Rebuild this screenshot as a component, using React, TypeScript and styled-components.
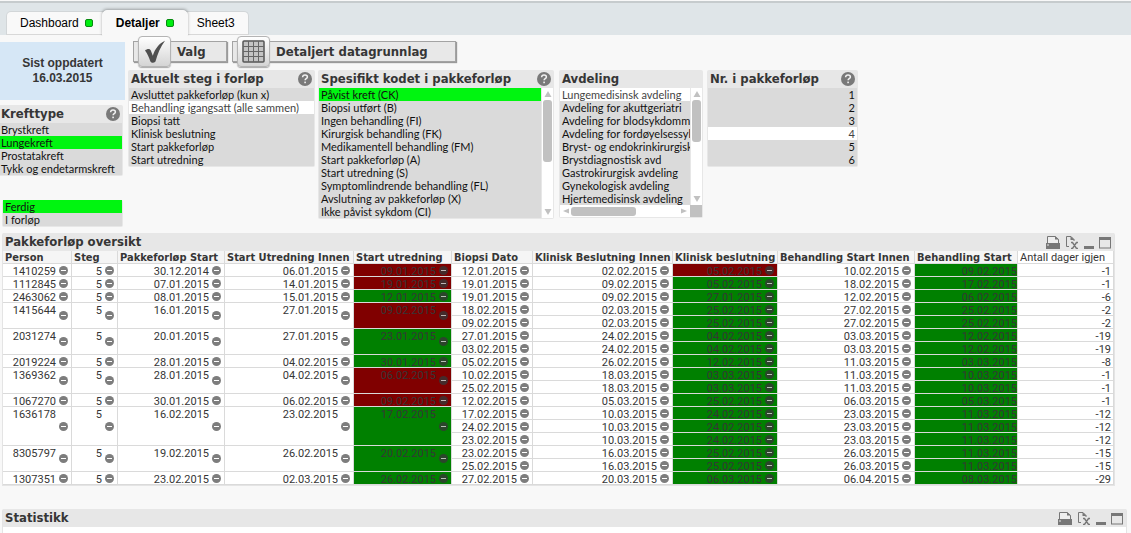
import React from "react";
import styled, { createGlobalStyle, css } from "styled-components";

const UI_FONT = `Roboto, "DejaVu Sans Condensed", sans-serif`;
const LIST_FONT = `Lato, Roboto, sans-serif`;
const TITLE_FONT = `"DejaVu Sans Condensed", "DejaVu Sans", sans-serif`;
const TAB_FONT = `"Liberation Sans", Arial, sans-serif`;

const GlobalStyle = createGlobalStyle`
  *, *::before, *::after { box-sizing: border-box; }
  body { margin: 0; background: #f8f8f8; }
  button { font: inherit; color: inherit; margin: 0; padding: 0; border: 0; background: none; text-align: inherit; cursor: pointer; }
  ul { list-style: none; margin: 0; padding: 0; }
  h2 { margin: 0; font-weight: bold; }
`;

const Page = styled.div`
  display: flex;
  flex-direction: column;
  min-height: 100vh;
  font: 11px/13px ${UI_FONT};
  color: #363636;
`;

/* ---------- sheet tabs ---------- */

const TabBar = styled.nav`
  display: flex;
  align-items: flex-end;
  height: 36px;
  padding-left: 6px;
  background: #dfe5e8;
  border-top: 1px solid #f8f8f8;
  box-shadow: inset 0 2px 0 #c6cbcd, inset 0 -1px 0 #f8f8f8;
`;

const Tab = styled.button<{ $active?: boolean }>`
  display: flex;
  align-items: center;
  gap: 6px;
  height: 24px;
  margin-bottom: 1px;
  padding: 0 13px;
  border: 1px solid #d2d6d8;
  border-bottom-color: #d8d8d8;
  border-radius: 5px 5px 0 0;
  background: #f9f9f9;
  font: 12px/14px ${TAB_FONT};
  color: #000;
  ${(p) =>
    p.$active &&
    css`
      position: relative;
      z-index: 1;
      height: 26px;
      margin: 0 -5px;
      border-color: #f8f8f8;
      background: #f8f8f8;
      font-weight: bold;
      box-shadow: 0 -1px 3px rgba(0, 0, 0, 0.3);
      clip-path: inset(-4px -4px 0 -4px);
    `}
`;

const Flag = styled.span`
  width: 8px;
  height: 8px;
  border: 1px solid #0a8a12;
  border-radius: 2px;
  background: #00ee10;
`;

/* ---------- filter area ---------- */

const Filters = styled.section`
  display: flex;
  align-items: flex-start;
  gap: 3px;
`;

const SideColumn = styled.div`
  display: flex;
  flex-direction: column;
  flex: none;
  width: 125px;
  padding-top: 6px;
`;

const Updated = styled.div`
  height: 58px;
  margin-bottom: 5px;
  padding: 14px 0;
  background: #d6e7f6;
  font: bold 12px/15px ${TAB_FONT};
  text-align: center;
`;

const MainColumn = styled.div`
  flex: 1;
  min-width: 0;
`;

const ActionRow = styled.div`
  display: flex;
  align-items: center;
  gap: 5px;
  height: 31px;
  margin-bottom: 3px;
  padding-left: 5px;
`;

const ActionButton = styled.button<{ $width: number }>`
  display: flex;
  align-items: center;
  gap: 6px;
  width: ${(p) => p.$width}px;
  height: 21px;
  padding-left: 4px;
  border: 1px solid #a3a3a3;
  box-shadow: 1px 1px 1px #9a9a9a;
  background: #e8e8e8;
  font: bold 13px/18px ${TITLE_FONT};
  white-space: nowrap;
`;

const ActionTile = styled.span`
  display: flex;
  align-items: center;
  justify-content: center;
  flex: none;
  width: 33px;
  height: 31px;
  margin: -5px 0;
  border: 1px solid #b4b4b4;
  border-radius: 4px;
  box-shadow: 0 1px 1px #aaa;
  background: linear-gradient(#fff, #d4d4d4);
`;

const PanelRow = styled.div`
  display: flex;
  align-items: flex-start;
  gap: 4px;
`;

const ListPanel = styled.section<{ $width: number; $below?: number; $left?: number }>`
  flex: none;
  width: ${(p) => p.$width}px;
  margin-top: ${(p) => p.$below ?? 0}px;
  margin-left: ${(p) => p.$left ?? 0}px;
  padding: 0 1px 1px;
  border-radius: 2px;
  background: #e7e7e7;
`;

const PanelHead = styled.header`
  display: flex;
  align-items: center;
  justify-content: space-between;
  height: 18px;
  padding: 0 2px;
`;

const PanelTitle = styled.h2`
  font: bold 13px/18px ${TITLE_FONT};
  white-space: nowrap;
`;

const IconButton = styled.button`
  display: block;
  flex: none;
  line-height: 0;
`;

const ListBody = styled.div`
  display: flex;
`;

const List = styled.ul`
  flex: 1;
  min-width: 0;
  background: #dadada;
`;

const Item = styled.button<{ $state?: "selected" | "possible"; $right?: boolean }>`
  display: block;
  width: 100%;
  height: 13px;
  padding: 0 2px;
  overflow: hidden;
  font: 11px/14px ${LIST_FONT};
  white-space: nowrap;
  color: #111;
  text-align: ${(p) => (p.$right ? "right" : "left")};
  ${(p) => p.$state === "selected" && "background: #00f510;"}
  ${(p) => p.$state === "possible" && "background: #fff; color: #444;"}
`;

const Scroll = styled.div<{ $across?: boolean }>`
  display: flex;
  flex-direction: ${(p) => (p.$across ? "row" : "column")};
  align-items: center;
  flex: ${(p) => (p.$across ? "1" : "none")};
  ${(p) => (p.$across ? "height: 12px;" : "width: 11px; margin-left: 1px;")}
  padding: ${(p) => (p.$across ? "0 2px" : "2px 0")};
  background: #fff;
`;

const Thumb = styled.span<{ $length: number; $across?: boolean }>`
  width: ${(p) => (p.$across ? p.$length : 9)}px;
  height: ${(p) => (p.$across ? 9 : p.$length)}px;
  margin: ${(p) => (p.$across ? "0 auto 0 1px" : "2px 0 auto")};
  border-radius: 3px;
  background: #c1c1c1;
`;

const ScrollFoot = styled.div`
  display: flex;
`;

const ScrollCorner = styled.span`
  width: 12px;
  height: 12px;
  background: #c1c1c1;
`;

/* ---------- sheet objects ---------- */

const Sheet = styled.section<{ $gap: number; $right: number; $grow?: boolean }>`
  display: flex;
  flex-direction: column;
  flex: ${(p) => (p.$grow ? "1" : "none")};
  margin: ${(p) => p.$gap}px ${(p) => p.$right}px 0 2px;
  border: solid #e4e4e4;
  border-width: ${(p) => (p.$grow ? "0 1px" : "0 1px 1px")};
  border-radius: 2px 2px 0 0;
  background: #fff;
`;

const SheetHead = styled.header`
  display: flex;
  align-items: center;
  justify-content: space-between;
  height: 18px;
  padding: 0 3px 0 2px;
  background: #e7e7e7;
`;

const Tools = styled.div`
  display: flex;
  align-items: center;
  gap: 5px;
`;

const TableScroll = styled.div`
  overflow-x: auto;
`;

const Grid = styled.table`
  width: 100%;
  min-width: 1020px;
  table-layout: fixed;
  border-collapse: separate;
  border-spacing: 0;
`;

const HeadCell = styled.th<{ $plain?: boolean }>`
  padding: 0;
  border: solid #dadada;
  border-width: 0 1px 1px 0;
  background: ${(p) => (p.$plain ? "#fff" : "#f5f5f5")};
  font: bold 11px/14px ${TITLE_FONT};
  ${(p) => p.$plain && `font: 11px/14px ${UI_FONT};`}
  text-align: left;
`;

const HeadLabel = styled.div`
  height: 12px;
  padding-left: 2px;
  white-space: nowrap;
`;

const fills = { red: "#800000", green: "#008000" };
type Fill = keyof typeof fills;

const Cell = styled.td<{ $fill?: Fill }>`
  padding: 0;
  border: solid #dadada;
  border-width: 0 1px 1px 0;
  vertical-align: top;
  background: ${(p) => (p.$fill ? fills[p.$fill] : "#fff")};
`;

const CellLine = styled.div<{ $rows: number; $pad: number }>`
  display: flex;
  justify-content: flex-end;
  gap: 3px;
  height: ${(p) => p.$rows * 13 - 1}px;
  padding-right: ${(p) => p.$pad}px;
  line-height: 15px;
  white-space: nowrap;
`;

const Collapse = styled.button`
  align-self: center;
  flex: none;
  line-height: 0;
`;

/* ---------- icons ---------- */

const HelpIcon = () => (
  <svg width="14" height="14" viewBox="0 0 14 14" aria-hidden="true">
    <circle cx="7" cy="7" r="7" fill="#797979" />
    <path d="M4.6 5.2C4.7 3.7 5.7 3 7 3c1.400 0 2.400.8 2.400 2 0 1.700-2.300 1.700-2.300 3.300" fill="none" stroke="#f2f2f2" strokeWidth="1.500" />
    <rect x="6.300" y="9.600" width="1.600" height="1.600" fill="#f2f2f2" />
  </svg>
);

const CheckIcon = () => (
  <svg width="22" height="24" viewBox="0 0 22 24" aria-hidden="true">
    <path d="M1 10.500C3.500 8.500 6 8.300 7 11l1.800 4.800C11 8.800 15 3.500 21 .8 16.500 7 13.500 14 11.500 21.500c-1.600 1.800-3.900 1.800-5.100 0C5 17.500 3.500 13.500 1 10.500z" fill="#505050" />
  </svg>
);

const GridIcon = () => (
  <svg width="23" height="23" viewBox="0 0 23 23" aria-hidden="true">
    <rect x="1" y="1" width="21" height="21" rx="1" fill="#c4c4c4" stroke="#555" strokeWidth="1.500" />
    <path d="M6.500 1v21M11.500 1v21M16.500 1v21M1 6.500h21M1 11.500h21M1 16.500h21" stroke="#666" fill="none" />
  </svg>
);

const MinusIcon = ({ dim }: { dim?: boolean }) => (
  <svg width="9" height="9" viewBox="0 0 9 9" aria-hidden="true">
    <circle cx="4.500" cy="4.500" r="4.500" fill={dim ? "#363636" : "#7d7d7d"} fillOpacity={dim ? 0.8 : 1} />
    <rect x="2" y="4" width="5" height="1" fill="#fff" fillOpacity={dim ? 0.65 : 1} />
  </svg>
);

const PrintIcon = () => (
  <svg width="14" height="13" viewBox="0 0 14 13" aria-hidden="true">
    <path d="M1.500 7V.5h7.500l3.500 3V7" fill="#eee" stroke="#777" />
    <path d="M9 0v3.500h4z" fill="#777" />
    <path d="M0 7h14v6H0z" fill="#777" />
    <rect x="1" y="8.500" width="2" height="1" fill="#e7e7e7" />
  </svg>
);

const ExportIcon = () => (
  <svg width="14" height="13" viewBox="0 0 14 13" aria-hidden="true">
    <path d="M4 10.500H1.500V.5H6l3 3V5" fill="none" stroke="#777" />
    <path d="M5.500 0v4H9.500z" fill="#777" />
    <path d="M6 6.500h1.500l4 6H13M13 6.500h-1.500l-4 6H6" fill="none" stroke="#777" strokeWidth="1.400" />
  </svg>
);

const MinimizeIcon = () => (
  <svg width="10" height="13" viewBox="0 0 10 13" aria-hidden="true">
    <rect y="10" width="10" height="3" fill="#777" />
  </svg>
);

const MaximizeIcon = () => (
  <svg width="12" height="13" viewBox="0 0 12 13" aria-hidden="true">
    <rect x=".5" y="1.500" width="11" height="10.500" fill="none" stroke="#777" />
    <rect y="1" width="12" height="3" fill="#777" />
  </svg>
);

const arrowPaths = {
  up: "M4 1l3.500 6h-7z",
  down: "M4 7L.5 1h7z",
  left: "M1 4l6-2.500v5z",
  right: "M7 4L1 1.500v5z",
};

const Arrow = ({ to }: { to: keyof typeof arrowPaths }) => (
  <IconButton aria-label={to}>
    <svg width="8" height="8" viewBox="0 0 8 8" aria-hidden="true">
      <path d={arrowPaths[to]} fill="#c1c1c1" />
    </svg>
  </IconButton>
);

/* ---------- list boxes ---------- */

type ListProps = {
  title?: string;
  help?: boolean;
  items: string[];
  selected?: string;
  possible?: string;
  width: number;
  below?: number;
  left?: number;
  right?: boolean;
  thumb?: number;
  acrossThumb?: number;
};

function ListBox({ title, help, items, selected, possible, width, below, left, right, thumb, acrossThumb }: ListProps) {
  return (
    <ListPanel $width={width} $below={below} $left={left}>
      {title && (
        <PanelHead>
          <PanelTitle>{title}</PanelTitle>
          {help && (
            <IconButton aria-label={`Hjelp: ${title}`}>
              <HelpIcon />
            </IconButton>
          )}
        </PanelHead>
      )}
      <ListBody>
        <List>
          {items.map((item) => (
            <li key={item}>
              <Item $right={right} aria-pressed={item === selected} $state={item === selected ? "selected" : item === possible ? "possible" : undefined}>
                {item}
              </Item>
            </li>
          ))}
        </List>
        {thumb && (
          <Scroll>
            <Arrow to="up" />
            <Thumb $length={thumb} />
            <Arrow to="down" />
          </Scroll>
        )}
      </ListBody>
      {acrossThumb && (
        <ScrollFoot>
          <Scroll $across>
            <Arrow to="left" />
            <Thumb $across $length={acrossThumb} />
            <Arrow to="right" />
          </Scroll>
          <ScrollCorner />
        </ScrollFoot>
      )}
    </ListPanel>
  );
}

/* ---------- patient pathway table ---------- */

const columns: [string, number][] = [
  ["Person", 69],
  ["Steg", 46],
  ["Pakkeforløp Start", 107],
  ["Start Utredning Innen", 129],
  ["Start utredning", 98],
  ["Biopsi Dato", 81],
  ["Klinisk Beslutning Innen", 140],
  ["Klinisk beslutning", 105],
  ["Behandling Start Innen", 137],
  ["Behandling Start", 103],
  ["Antall dager igjen", 96],
];

type Detail = [biopsy: string, decideBy: string, decided: string, treatBy: string, treated: string, days: number];
type Person = { lead: [string, string, string, string]; fill: Fill; decidedFill?: Fill; details: Detail[] };

const people: Person[] = [
  { lead: ["1410259", "30.12.2014", "06.01.2015", "09.01.2015"], fill: "red", decidedFill: "red", details: [["12.01.2015", "02.02.2015", "05.02.2015", "10.02.2015", "09.02.2015", -1]] },
  { lead: ["1112845", "07.01.2015", "14.01.2015", "19.01.2015"], fill: "red", details: [["19.01.2015", "09.02.2015", "05.02.2015", "18.02.2015", "17.02.2015", -1]] },
  { lead: ["2463062", "08.01.2015", "15.01.2015", "12.01.2015"], fill: "green", details: [["19.01.2015", "09.02.2015", "27.01.2015", "12.02.2015", "06.02.2015", -6]] },
  {
    lead: ["1415644", "16.01.2015", "27.01.2015", "09.02.2015"],
    fill: "red",
    details: [
      ["18.02.2015", "02.03.2015", "25.02.2015", "27.02.2015", "25.02.2015", -2],
      ["09.02.2015", "02.03.2015", "25.02.2015", "27.02.2015", "25.02.2015", -2],
    ],
  },
  {
    lead: ["2031274", "20.01.2015", "27.01.2015", "23.01.2015"],
    fill: "green",
    details: [
      ["27.01.2015", "24.02.2015", "04.02.2015", "03.03.2015", "12.02.2015", -19],
      ["03.02.2015", "24.02.2015", "04.02.2015", "03.03.2015", "12.02.2015", -19],
    ],
  },
  { lead: ["2019224", "28.01.2015", "04.02.2015", "30.01.2015"], fill: "green", details: [["05.02.2015", "26.02.2015", "12.02.2015", "11.03.2015", "03.03.2015", -8]] },
  {
    lead: ["1369362", "28.01.2015", "04.02.2015", "06.02.2015"],
    fill: "red",
    details: [
      ["10.02.2015", "18.03.2015", "03.03.2015", "11.03.2015", "10.03.2015", -1],
      ["25.02.2015", "18.03.2015", "03.03.2015", "11.03.2015", "10.03.2015", -1],
    ],
  },
  { lead: ["1067270", "30.01.2015", "06.02.2015", "09.02.2015"], fill: "red", details: [["12.02.2015", "05.03.2015", "25.02.2015", "06.03.2015", "05.03.2015", -1]] },
  {
    lead: ["1636178", "16.02.2015", "23.02.2015", "17.02.2015"],
    fill: "green",
    details: [
      ["17.02.2015", "10.03.2015", "24.02.2015", "23.03.2015", "11.03.2015", -12],
      ["24.02.2015", "10.03.2015", "24.02.2015", "23.03.2015", "11.03.2015", -12],
      ["23.02.2015", "10.03.2015", "24.02.2015", "23.03.2015", "11.03.2015", -12],
    ],
  },
  {
    lead: ["8305797", "19.02.2015", "26.02.2015", "20.02.2015"],
    fill: "green",
    details: [
      ["23.02.2015", "16.03.2015", "25.02.2015", "26.03.2015", "11.03.2015", -15],
      ["25.02.2015", "16.03.2015", "25.02.2015", "26.03.2015", "11.03.2015", -15],
    ],
  },
  { lead: ["1307351", "23.02.2015", "02.03.2015", "26.02.2015"], fill: "green", details: [["27.02.2015", "20.03.2015", "06.03.2015", "06.04.2015", "08.03.2015", -29]] },
];

function Value({ children, rows = 1, fill, end }: { children: React.ReactNode; rows?: number; fill?: Fill; end?: number }) {
  return (
    <Cell rowSpan={rows} $fill={fill}>
      <CellLine $rows={rows} $pad={end ?? 3}>
        <span>{children}</span>
        {end === undefined && (
          <Collapse aria-label="Skjul">
            <MinusIcon dim={!!fill} />
          </Collapse>
        )}
      </CellLine>
    </Cell>
  );
}

function PersonRows({ person }: { person: Person }) {
  const rows = person.details.length;
  const [id, start, investigateBy, investigated] = person.lead;
  return (
    <>
      {person.details.map(([biopsy, decideBy, decided, treatBy, treated, days], i) => (
        <tr key={i}>
          {i === 0 && (
            <>
              <Value rows={rows}>{id}</Value>
              <Value rows={rows}>5</Value>
              <Value rows={rows}>{start}</Value>
              <Value rows={rows}>{investigateBy}</Value>
              <Value rows={rows} fill={person.fill}>{investigated}</Value>
            </>
          )}
          <Value>{biopsy}</Value>
          <Value>{decideBy}</Value>
          <Value fill={person.decidedFill ?? "green"}>{decided}</Value>
          <Value>{treatBy}</Value>
          <Value fill="green" end={0}>{treated}</Value>
          <Value end={2}>{days}</Value>
        </tr>
      ))}
    </>
  );
}

function SheetTitle({ title }: { title: string }) {
  return (
    <SheetHead>
      <PanelTitle>{title}</PanelTitle>
      <Tools>
        <IconButton aria-label="Skriv ut"><PrintIcon /></IconButton>
        <IconButton aria-label="Send til Excel"><ExportIcon /></IconButton>
        <IconButton aria-label="Minimer"><MinimizeIcon /></IconButton>
        <IconButton aria-label="Maksimer"><MaximizeIcon /></IconButton>
      </Tools>
    </SheetHead>
  );
}

export default function App() {
  return (
    <Page>
      <GlobalStyle />
      <TabBar>
        <Tab>Dashboard<Flag /></Tab>
        <Tab $active aria-current="page">Detaljer<Flag /></Tab>
        <Tab>Sheet3</Tab>
      </TabBar>

      <Filters>
        <SideColumn>
          <Updated>Sist oppdatert<br />16.03.2015</Updated>
          <ListBox title="Krefttype" help width={125} left={-2} selected="Lungekreft" items={["Brystkreft", "Lungekreft", "Prostatakreft", "Tykk og endetarmskreft"]} />
          <ListBox width={121} left={2} below={24} selected="Ferdig" items={["Ferdig", "I forløp"]} />
        </SideColumn>
        <MainColumn>
          <ActionRow>
            <ActionButton $width={94}>
              <ActionTile><CheckIcon /></ActionTile>
              Valg
            </ActionButton>
            <ActionButton $width={224}>
              <ActionTile><GridIcon /></ActionTile>
              Detaljert datagrunnlag
            </ActionButton>
          </ActionRow>
          <PanelRow>
            <ListBox
              title="Aktuelt steg i forløp"
              help
              width={187}
              possible="Behandling igangsatt (alle sammen)"
              items={["Avsluttet pakkeforløp (kun x)", "Behandling igangsatt (alle sammen)", "Biopsi tatt", "Klinisk beslutning", "Start pakkeforløp", "Start utredning"]}
            />
            <ListBox
              title="Spesifikt kodet i pakkeforløp"
              help
              width={236}
              left={-1}
              thumb={62}
              selected="Påvist kreft (CK)"
              items={[
                "Påvist kreft (CK)",
                "Biopsi utført (B)",
                "Ingen behandling (FI)",
                "Kirurgisk behandling (FK)",
                "Medikamentell behandling (FM)",
                "Start pakkeforløp (A)",
                "Start utredning (S)",
                "Symptomlindrende behandling (FL)",
                "Avslutning av pakkeforløp (X)",
                "Ikke påvist sykdom (CI)",
              ]}
            />
            <ListBox
              title="Avdeling"
              width={144}
              left={1}
              thumb={42}
              acrossThumb={65}
              possible="Lungemedisinsk avdeling"
              items={[
                "Lungemedisinsk avdeling",
                "Avdeling for akuttgeriatri",
                "Avdeling for blodsykdomme",
                "Avdeling for fordøyelsessyk",
                "Bryst- og endokrinkirurgisk",
                "Brystdiagnostisk avd",
                "Gastrokirurgisk avdeling",
                "Gynekologisk avdeling",
                "Hjertemedisinsk avdeling",
              ]}
            />
            <ListBox title="Nr. i pakkeforløp" help right width={151} possible="4" items={["1", "2", "3", "4", "5", "6"]} />
          </PanelRow>
        </MainColumn>
      </Filters>

      <Sheet $gap={6} $right={16}>
        <SheetTitle title="Pakkeforløp oversikt" />
        <TableScroll>
          <Grid>
            <colgroup>
              {columns.map(([name, width]) => (
                <col key={name} width={width} />
              ))}
            </colgroup>
            <thead>
              <tr>
                {columns.map(([name], i) => (
                  <HeadCell key={name} scope="col" $plain={i === columns.length - 1}>
                    <HeadLabel>{name}</HeadLabel>
                  </HeadCell>
                ))}
              </tr>
            </thead>
            <tbody>
              {people.map((person) => (
                <PersonRows key={person.lead[0]} person={person} />
              ))}
            </tbody>
          </Grid>
        </TableScroll>
      </Sheet>

      <Sheet $gap={23} $right={4} $grow>
        <SheetTitle title="Statistikk" />
      </Sheet>
    </Page>
  );
}
